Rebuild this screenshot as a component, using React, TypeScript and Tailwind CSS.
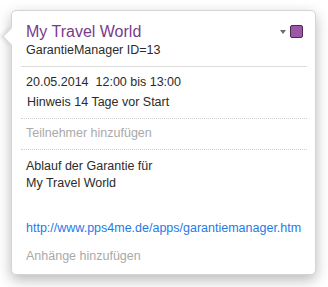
const FONT = { fontFamily: '"Liberation Sans", Arial, sans-serif' };

function Caret() {
  return (
    <svg width="6" height="4" viewBox="0 0 6 4" className="mt-[5px]">
      <path d="M0 0 L6 0 L3 4 Z" fill="#6b6b6b" />
    </svg>
  );
}

export default function App() {
  return (
    <div className="w-[328px] h-[287px] bg-white pt-[10px] pl-[11px]" style={FONT}>
      <div className="relative w-[305px] h-[265px] rounded-[5px] border border-[#d4d4d4] bg-white shadow-[0_5px_14px_rgba(0,0,0,0.28)]">
        {/* pointer */}
        <div className="absolute left-[-7px] top-[19px] w-[13px] h-[13px] rotate-45 bg-white border-l border-b border-[#d4d4d4] shadow-[-2px_2px_3px_rgba(0,0,0,0.08)]" />

        <div className="relative pl-[9px] pr-[8px] pt-[11px]">
          <div className="flex items-start justify-between pl-[5px] pr-[4px]">
            <div>
              <div className="text-[16px] leading-[20px] text-[#7a3b8b]">My Travel World</div>
              <div className="text-[12.5px] leading-[17px] text-[#2b2b2b]">GarantieManager ID=13</div>
            </div>
            <div className="flex items-start gap-[4px] mt-[3px]">
              <Caret />
              <div className="w-[13px] h-[13px] rounded-[2px] border border-[#4a2c52] bg-[#9b58a8]" />
            </div>
          </div>

          <div className="mt-[7px] h-px bg-[#dcdcdc]" />

          <div className="mt-[5px] pl-[5px] text-[12.5px] leading-[20px] text-[#2b2b2b]">
            <div className="whitespace-pre">20.05.2014  12:00 bis 13:00</div>
            <div className="pl-px">Hinweis 14 Tage vor Start</div>
          </div>

          <div className="mt-[6px] border-t border-dotted border-[#cfcfcf]" />

          <div className="mt-[4px] pl-[5px] text-[12.5px] leading-[20px] text-[#a9a9a9]">
            Teilnehmer hinzufügen
          </div>

          <div className="mt-[6px] border-t border-dotted border-[#cfcfcf]" />

          <div className="mt-[8px] pl-[5px] text-[12.5px] leading-[17px] text-[#2b2b2b]">
            <div>Ablauf der Garantie für</div>
            <div>My Travel World</div>
          </div>

          <div className="mt-[28px] pl-[5px] text-[12.5px] leading-[17px] text-[#1f7ae6]">
            http://www.pps4me.de/apps/garantiemanager.htm
          </div>

          <div className="mt-[11px] pl-[5px] text-[12.5px] leading-[17px] text-[#a9a9a9]">
            Anhänge hinzufügen
          </div>
        </div>
      </div>
    </div>
  );
}
